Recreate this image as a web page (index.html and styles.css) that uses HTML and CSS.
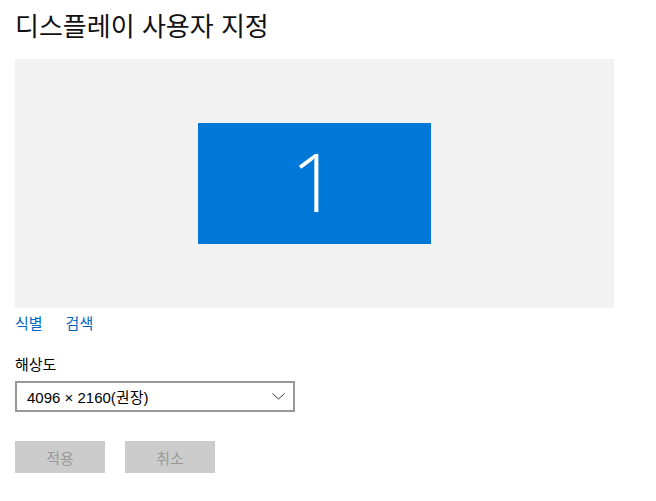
FILE: index.html
```html
<!DOCTYPE html>
<html lang="ko">
<head>
    <meta charset="UTF-8">
    <title>디스플레이 사용자 지정</title>
    <link rel="stylesheet" href="styles.css">
</head>
<body>
    <h1 class="page-title">디스플레이 사용자 지정</h1>

    <div class="preview">
        <div class="monitor">1</div>
    </div>

    <div class="links">
        <a href="#">식별</a>
        <a href="#">검색</a>
    </div>

    <div class="field">
        <label class="field-label">해상도</label>
        <div class="dropdown">
            <span>4096 × 2160(권장)</span>
            <svg class="chevron" width="13" height="7" viewBox="0 0 13 7">
                <path d="M0.5 0.5 L6.5 6 L12.5 0.5" fill="none" stroke="#333" stroke-width="1"/>
            </svg>
        </div>
    </div>

    <div class="actions">
        <button type="button" disabled>적용</button>
        <button type="button" disabled>취소</button>
    </div>
</body>
</html>
```

FILE: styles.css
```css
body {
    font-family: "Noto Sans CJK KR", "Noto Sans", sans-serif;
    margin: 0;
    padding: 0 15px;
    background: #fff;
    color: #000;
}
.page-title {
    font-size: 26px;
    font-weight: 400;
    margin: 0;
    padding-top: 7px;
    height: 59px;
    line-height: 36px;
    box-sizing: border-box;
    color: #111;
}
.preview {
    width: 599px;
    height: 249px;
    background-color: #f2f2f2;
    display: flex;
    align-items: center;
    justify-content: center;
}
.monitor {
    width: 233px;
    height: 121px;
    background-color: #0078d7;
    color: #fff;
    font-family: "Open Sans", sans-serif;
    font-weight: 300;
    font-size: 82px;
    line-height: 115px;
    text-align: center;
}
.links {
    display: flex;
    gap: 23px;
    margin-top: 5px;
    font-size: 15px;
    line-height: 20px;
}
.links a {
    color: #0067c0;
    text-decoration: none;
}
.field {
    margin-top: 21px;
}
.field-label {
    display: block;
    font-size: 15px;
    line-height: 20px;
    margin-bottom: 7px;
}
.dropdown {
    width: 280px;
    height: 31px;
    box-sizing: border-box;
    border: 2px solid #999;
    display: flex;
    align-items: center;
    justify-content: space-between;
    padding: 0 8px 0 10px;
    font-family: "Liberation Sans", "Noto Sans CJK KR", sans-serif;
    font-size: 15px;
}
.actions {
    display: flex;
    gap: 20px;
    margin-top: 29px;
}
button {
    width: 90px;
    height: 32px;
    border: none;
    background-color: #ccc;
    color: #999;
    font-family: inherit;
    font-size: 15px;
    padding: 0;
}
```
